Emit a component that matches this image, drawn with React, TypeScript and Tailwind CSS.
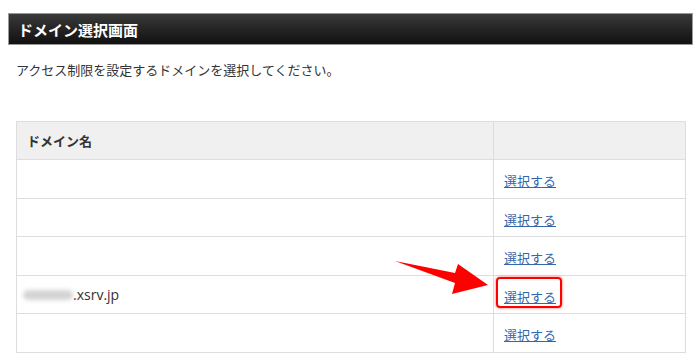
const rows = [
  { domain: "", h: "h-[39px]", last: false },
  { domain: "", h: "h-[38px]", last: false },
  { domain: "", h: "h-[39px]", last: false },
  { domain: "xsrv", h: "h-[38px]", last: false },
  { domain: "", h: "h-[38px]", last: true },
];

function Arrow() {
  return (
    <svg
      className="absolute left-[390px] top-[255px]"
      width="105"
      height="45"
      viewBox="390 255 105 45"
    >
      <polygon
        points="395,261 455,273 458,264 488,285 452,294 455,283"
        fill="#ff0000"
      />
    </svg>
  );
}

export default function App() {
  return (
    <div
      className="relative w-[700px] h-[362px] bg-white overflow-hidden text-[#333]"
      style={{ fontFamily: '"Noto Sans CJK JP", "Noto Sans", sans-serif' }}
    >
      <div className="pt-[13px] pl-[8px]">
        <div className="w-[685px] h-[32px] border border-[#999] bg-gradient-to-b from-[#3a3a3a] to-[#111] flex items-center pl-[9px]">
          <h1 className="text-white font-bold text-[15px] leading-none">ドメイン選択画面</h1>
        </div>
      </div>
      <p className="pl-[16px] mt-[16px] text-[13px] leading-[18px]">
        アクセス制限を設定するドメインを選択してください。
      </p>
      <div className="ml-[16px] mt-[42px] w-[670px] border border-[#ddd]">
        <div className="flex h-[38px] bg-[#f0f0f0] border-b border-[#ddd]">
          <div className="w-[477px] border-r border-[#ddd] flex items-center pl-[10px] text-[13px] font-bold">
            ドメイン名
          </div>
          <div className="flex-1" />
        </div>
        {rows.map((r, i) => (
          <div
            key={i}
            className={`flex ${r.h} ${r.last ? "" : "border-b border-[#ddd]"}`}
          >
            <div className="w-[477px] border-r border-[#ddd] flex items-center pl-[6px] text-[14px]">
              {r.domain && (
                <>
                  <span className="inline-block w-[50px] h-[10px] rounded-full bg-[#d4d4d4] blur-[2px]" />
                  <span style={{ fontFamily: '"Open Sans", "Noto Sans", sans-serif' }}>.xsrv.jp</span>
                </>
              )}
            </div>
            <div className="flex-1 flex items-center pl-[10px]">
              <span className="relative">
                <a href="#" className="text-[13px] text-[#3366aa] underline">
                  選択する
                </a>
                {r.domain && (
                  <span className="absolute -left-[8px] -top-[6px] w-[66px] h-[31px] rounded-[4px] border-2 border-[#ff0000] shadow-[0_0_3px_rgba(255,0,0,0.6)]" />
                )}
              </span>
            </div>
          </div>
        ))}
      </div>
      <Arrow />
    </div>
  );
}
